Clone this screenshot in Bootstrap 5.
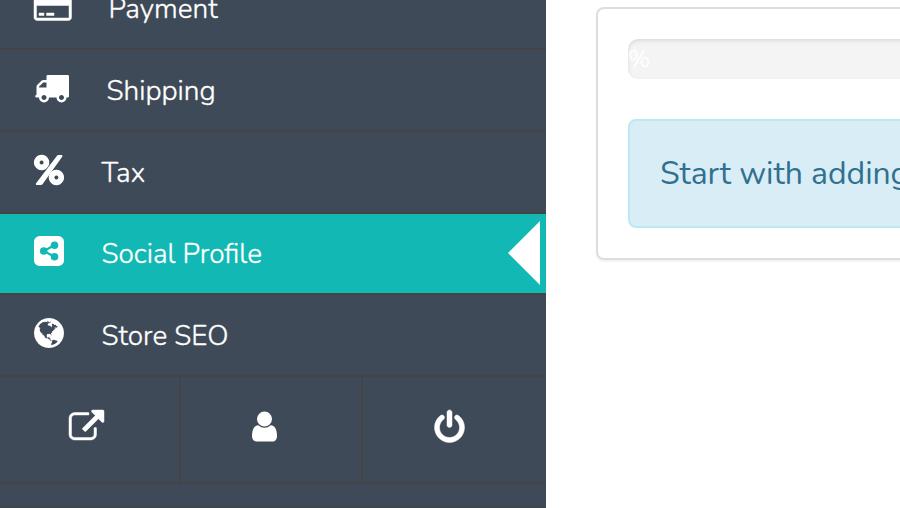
<!DOCTYPE html>
<html lang="en">
<head>
<meta charset="utf-8">
<meta name="viewport" content="width=device-width, initial-scale=1">
<title>Store settings</title>
<link href="https://cdn.jsdelivr.net/npm/bootstrap@5.3.0/dist/css/bootstrap.min.css" rel="stylesheet">
<style>
body{font-family:Nunito,Lato,"Open Sans",sans-serif;background:#fff}
.shell{height:508px}
.side{width:546px;background:#3f4a58;color:#fff}
.side a{color:#fff;text-decoration:none}
.menu-row{height:82px;border-bottom:2px solid #444;padding-left:34px;font-size:28px;font-weight:300;line-height:38px}
.menu-row.first{height:50px;padding-bottom:20px}
.menu-row.on{background:#12b8b3;height:81px}
.menu-row svg,.tools svg{flex:none;overflow:visible;fill:#fff;display:block}
.menu-row .ico{margin-right:37.5px;padding-bottom:5px;flex:none}
.menu-row.first .ico{padding-bottom:5.5px;margin-right:37px}
.menu-row:not(.first):not(.on) .label-text{padding-top:2px}
.bold-icon{stroke:#fff;stroke-width:24}
.label-text{white-space:nowrap;-webkit-text-stroke:.35px #fff}
.arrow{right:6px;top:7px;width:32px;height:64px;background:#fff;clip-path:polygon(100% 0,0 50%,100% 100%)}
.tools{height:107px;border-bottom:2px solid #444}
.tools a{border-right:2px solid #444;width:182px;padding:0 13px 6px 0}
.tools a:first-child{width:181px;padding:0 6px 5px 0}
.tools a:last-child{border-right:0;width:183px;padding:0 10px 5px 0}
.side-end{height:24px;border-bottom:1px solid #444}
.main-area{padding:7px 0 0 50px}
.panel-box{width:520px;height:253px;border:2px solid #ddd;border-radius:8px;box-shadow:0 2px 2px rgba(0,0,0,.05);padding:30px}
.meter{height:40px;border-radius:10px;background:#f4f4f4;box-shadow:inset 0 2px 4px rgba(0,0,0,.1);color:#fff;font-size:24px;line-height:40px;margin-bottom:40px}
.notice{height:109px;border:2px solid #bce8f1;border-radius:8px;background:#d9edf7;color:#31708f;font-size:32px;font-weight:400;letter-spacing:-.06px;line-height:105px;padding-left:30px;white-space:nowrap}
</style>
<script src="https://cdn.jsdelivr.net/npm/bootstrap@5.3.0/dist/js/bootstrap.bundle.min.js"></script>
</head>
<body class="overflow-hidden">
<div class="shell d-flex overflow-hidden">
<nav class="side flex-shrink-0 d-flex flex-column">
<a href="#" class="menu-row first d-flex align-items-end"><span class="ico"><svg class="bold-icon" width="37.5" height="35" viewBox="0 0 1920 1792"><path d="M1760 128q66 0 113 47t47 113v1216q0 66-47 113t-113 47h-1600q-66 0-113-47t-47-113v-1216q0-66 47-113t113-47h1600zm-1600 128q-13 0-22.5 9.5t-9.5 22.5v224h1664v-224q0-13-9.5-22.5t-22.5-9.5h-1600zm1600 1280q13 0 22.5-9.5t9.500-22.5v-608h-1664v608q0 13 9.5 22.5t22.5 9.5h1600zm-1504-128v-128h256v128h-256zm384 0v-128h384v128h-384z"/></svg></span><span class="label-text">Payment</span></a>
<a href="#" class="menu-row d-flex align-items-center"><span class="ico"><svg width="35" height="35" viewBox="0 0 1792 1792"><path d="M640 1408q0-52-38-90t-90-38-90 38-38 90 38 90 90 38 90-38 38-90zm-384-512h384v-256h-158q-13 0-22 9l-195 195q-9 9-9 22v30zm1280 512q0-52-38-90t-90-38-90 38-38 90 38 90 90 38 90-38 38-90zm256-1088v1024q0 15-4 26.5t-13.5 18.5-16.5 11.5-23.5 6-22.5 2-25.5 0-22.5-.5q0 106-75 181t-181 75-181-75-75-181h-384q0 106-75 181t-181 75-181-75-75-181h-64q-3 0-22.5.5t-25.5 0-22.5-2-23.5-6-16.5-11.5-13.5-18.5-4-26.5q0-26 19-45t45-19v-320q0-8-.5-35t0-38 2.5-34.5 6.5-37 14-30.5 22.5-30l198-198q19-19 50.5-32t58.5-13h160v-192q0-26 19-45t45-19h1024q26 0 45 19t19 45z"/></svg></span><span class="label-text">Shipping</span></a>
<a href="#" class="menu-row d-flex align-items-center"><span class="ico"><svg width="30" height="30" viewBox="0 0 30 30"><path fill-rule="evenodd" d="M7.600-.2a7.700 7.700 0 1 0 .01 0zM7.600 5.500a2 2 0 1 1-.01 0zM22.400 14.800a7.700 7.700 0 1 0 .01 0zM22.400 20.500a2 2 0 1 1-.01 0z"/><path d="M23.200.6Q23.700 0 24.400 0H27.500Q29 .2 28.200 1.800L8.500 29.300Q8 30 7.200 30H2.500Q1.300 29.600 2.100 28.200z"/></svg></span><span class="label-text">Tax</span></a>
<a href="#" class="menu-row on position-relative d-flex align-items-center"><span class="ico"><svg width="30" height="30" viewBox="0 0 30 30"><rect width="30" height="30" rx="5.600"/><g fill="#12b8b3"><circle cx="9.700" cy="15" r="3.800"/><circle cx="20.500" cy="9.300" r="3.800"/><circle cx="20.500" cy="20.700" r="3.800"/></g><path d="M20.500 9.300L9.700 15l10.800 5.700" fill="none" stroke="#12b8b3" stroke-width="2.200"/></svg></span><span class="label-text">Social Profile</span><span class="arrow position-absolute"></span></a>
<a href="#" class="menu-row d-flex align-items-center"><span class="ico"><svg width="30" height="30" viewBox="128 128 1536 1536"><path d="M896 128q209 0 385.500 103t279.500 279.500 103 385.500-103 385.500-279.500 279.500-385.500 103-385.500-103-279.500-279.500-103-385.500 103-385.500 279.500-279.500 385.500-103zm274 521q-2 1-9.500 9.500t-13.500 9.500q2 0 4.500-5t5-11 3.500-7q6-7 22-15 14-6 52-12 34-8 51 11-2-2 9.500-13t14.500-12q3-2 15-4.500t15-7.500l2-22q-12 1-17.500-7t-6.500-21q0 2-6 8 0-7-4.500-8t-11.500 1-9 1q-10-3-15-7.500t-8-16.500-4-15q-2-5-9.500-11t-9.500-10q-1-2-2.500-5.500t-3-6.500-4-5.500-5.500-2.500-7 5-7.500 10-4.500 5q-3-2-6-1.500t-4.500 1-4.500 3-5 3.500q-3 2-8.500 3t-8.500 2q15-5-1-11-10-4-16-3 9-4 7.500-12t-8.500-14h5q-1-4-8.500-8.500t-17.500-8.500-13-6q-8-5-34-9.500t-33-.5q-5 6-4.500 10.500t4 14 3.500 12.500q1 6-5.500 13t-6.500 12q0 7 14 15.500t10 21.500q-3 8-16 16t-16 12q-5 8-1.500 18.500t10.500 16.500q2 2 1.500 4t-3.500 4.500-5.500 4-6.500 3.500l-3 2q-11 5-20.500-6t-13.500-26q-7-25-16-30-23-8-29 1-5-13-41-26-25-9-58-4 6-1 0-15-7-15-19-12 3-6 4-17.500t1-13.500q3-13 12-23 1-1 7-8.500t9.500-13.500.5-6q35 4 50-11 5-5 11.500-17t10.500-17q9-6 14-5.500t14.500 5.500 14.500 5q14 1 15.500-11t-7.500-20q12 1 3-17-4-7-8-9-12-4-27 5-8 4 2 8-1-1-9.500 10.500t-16.500 17.500-16-5q-1-1-5.500-13.500t-9.500-13.500q-8 0-16 15 3-8-11-15t-24-8q19-12-8-27-7-4-20.500-5t-19.500 4q-5 7-5.500 11.500t5 8 10.500 5.500 11.500 4 8.500 3q14 10 8 14-2 1-8.500 3.500t-11.500 4.500-6 4q-3 4 0 14t-2 14q-5-5-9-17.500t-7-16.500q7 9-25 6l-10-1q-4 0-16 2t-20.500 1-13.500-8q-4-8 0-20 1-4 4-2-4-3-11-9.500t-10-8.500q-46 15-94 41 6 1 12-1 5-2 13-6.500t10-5.500q34-14 42-7l5-5q14 16 20 25-7-4-30-1-20 6-22 12 7 12 5 18-4-3-11.500-10t-14.500-11-15-5q-16 0-22 1-146 80-235 222 7 7 12 8 4 1 5 9t2.500 11 11.500-3q9 8 3 19 1-1 44 27 19 17 21 21 3 11-10 18-1-2-9-9t-9-4q-3 5 .5 18.500t10.500 12.500q-7 0-9.500 16t-2.500 35.500-1 23.500l2 1q-3 12 5.500 34.500t21.500 19.500q-13 3 20 43 6 8 8 9 3 2 12 7.500t15 10 10 10.500q4 5 10 22.500t14 23.500q-2 6 9.500 20t10.500 23q-1 0-2.500 1t-2.500 1q3 7 15.500 14t15.500 13q1 3 2 10t3 11 8 2q2-20-24-62-15-25-17-29-3-5-5.500-15.500t-4.500-14.500q2 0 6 1.500t8.500 3.500 7.500 4 2 3q-3 7 2 17.500t12 18.500 17 19 12 13q6 6 14 19.500t0 13.500q9 0 20 10t17 20q5 8 8 26t5 24q2 7 8.500 13.500t12.500 9.500l16 8 13 7q5 2 18.500 10.500t21.500 11.500q10 4 16 4t14.500-2.500 13.500-3.500q15-2 29 15t21 21q36 19 55 11-2 1 .5 7.500t8 15.500 9 14.500 5.500 8.500q5 6 18 15t18 15q6-4 7-9-3 8 7 20t18 10q14-3 14-32-31 15-49-18 0-1-2.500-5.500t-4-8.500-2.500-8.500 0-7.500 5-3q9 0 10-3.500t-2-12.500-4-13q-1-8-11-20t-12-15q-5 9-16 8t-16-9q0 1-1.500 5.500t-1.500 6.500q-13 0-15-1 1-3 2.500-17.500t3.500-22.500q1-4 5.500-12t7.500-14.500 4-12.500-4.500-9.500-17.500-2.500q-19 1-26 20-1 3-3 10.500t-5 11.500-9 7q-7 3-24 2t-24-5q-13-8-22.500-29t-9.500-37q0-10 2.500-26.500t3-25-5.500-24.500q3-2 9-9.500t10-10.500q2-1 4.500-1.500t4.500 0 4-1.500 3-6q-1-1-4-3-3-3-4-3 7 3 28.500-1.500t27.500 1.500q15 11 22-2 0-1-2.500-9.500t-.5-13.500q5 27 29 9 3 3 15.500 5t17.500 5q3 2 7 5.500t5.500 4.500 5-.5 8.500-6.500q10 14 12 24 11 40 19 44 7 3 11 2t4.500-9.500 0-14-1.500-12.500l-1-8v-18l-1-8q-15-3-18.500-12t1.500-18.500 15-18.500q1-1 8-3.500t15.500-6.500 12.500-8q21-19 15-35 7 0 11-9-1 0-5-3t-7.500-5-4.500-2q9-5 2-16 5-3 7.500-11t7.500-10q9 12 21 2 8-8 1-16 5-7 20.500-10.500t18.500-9.500q7 2 8-2t1-12 3-12q4-5 15-9t13-5l17-11q3-4 0-4 18 2 31-11 10-11-6-20 3-6-3-9.500t-15-5.500q3-1 11.500-.5t10.500-1.500q15-10-7-16-17-5-43 12zm-163 877q206-36 351-189-3-3-12.500-4.500t-12.500-3.500q-18-7-24-8 1-7-2.500-13t-8-9-12.500-8-11-7q-2-2-7-6t-7-5.500-7.500-4.500-8.500-2-10 1l-3 1q-3 1-5.500 2.500t-5.500 3-4 3 0 2.500q-21-17-36-22-5-1-11-5.500t-10.500-7-10-1.500-11.500 7q-5 5-6 15t-2 13q-7-5 0-17.500t2-18.500q-3-6-10.500-4.500t-12 4.500-11.500 8.500-9 6.500-8.500 5.500-8.500 7.500q-3 4-6 12t-5 11q-2-4-11.500-6.500t-9.500-5.500q2 10 4 35t5 38q7 31-12 48-27 25-29 40-4 22 12 26 0 7-8 20.500t-7 21.500q0 6 2 16z"/></svg></span><span class="label-text">Store SEO</span></a>
<div class="tools d-flex">
<a href="#" class="d-flex flex-shrink-0 align-items-center justify-content-center"><svg class="bold-icon" width="35" height="35" viewBox="0 0 1792 1792"><path d="M1408 928v320q0 119-84.500 203.500t-203.500 84.500h-832q-119 0-203.500-84.500t-84.500-203.500v-832q0-119 84.500-203.500t203.500-84.500h704q14 0 23 9t9 23v64q0 14-9 23t-23 9h-704q-66 0-113 47t-47 113v832q0 66 47 113t113 47h832q66 0 113-47t47-113v-320q0-14 9-23t23-9h64q14 0 23 9t9 23zm384-864v512q0 26-19 45t-45 19-45-19l-176-176-652 652q-10 10-23 10t-23-10l-114-114q-10-10-10-23t10-23l652-652-176-176q-19-19-19-45t19-45 45-19h512q26 0 45 19t19 45z"/></svg></a>
<a href="#" class="d-flex flex-shrink-0 align-items-center justify-content-center"><svg width="35" height="35" viewBox="0 0 1792 1792"><path d="M1536 1399q0 109-62.500 187t-150.500 78h-854q-88 0-150.500-78t-62.500-187q0-85 8.500-160.500t31.500-152 58.500-131 94-89 134.500-34.500q131 128 313 128t313-128q76 0 134.500 34.500t94 89 58.500 131 31.500 152 8.500 160.500zm-256-887q0 159-112.500 271.500t-271.500 112.500-271.500-112.500-112.500-271.500 112.500-271.500 271.500-112.500 271.500 112.500 112.500 271.500z"/></svg></a>
<a href="#" class="d-flex flex-shrink-0 align-items-center justify-content-center"><svg class="bold-icon" width="35" height="35" viewBox="0 0 1792 1792"><path d="M1664 896q0 156-61 298t-164 245-245 164-298 61-298-61-245-164-164-245-61-298q0-182 80.500-343t226.500-270q43-32 95.500-25t83.500 50q32 42 24.500 94.500t-49.500 84.500q-98 74-151.500 181t-53.500 228q0 104 40.500 198.500t109.500 163.500 163.500 109.500 198.500 40.500 198.500-40.500 163.500-109.500 109.500-163.500 40.500-198.500q0-121-53.500-228t-151.500-181q-42-32-49.500-84.500t24.500-94.500q31-43 84-50t95 25q146 109 226.500 270t80.500 343zm-640-768v640q0 52-38 90t-90 38-90-38-38-90v-640q0-52 38-90t90-38 90 38 38 90z"/></svg></a>
</div>
<div class="side-end"></div>
</nav>
<main class="main-area flex-shrink-0">
<div class="panel-box"><div class="meter">%</div><div class="notice">Start with adding</div></div>
</main>
</div>
</body>
</html>
